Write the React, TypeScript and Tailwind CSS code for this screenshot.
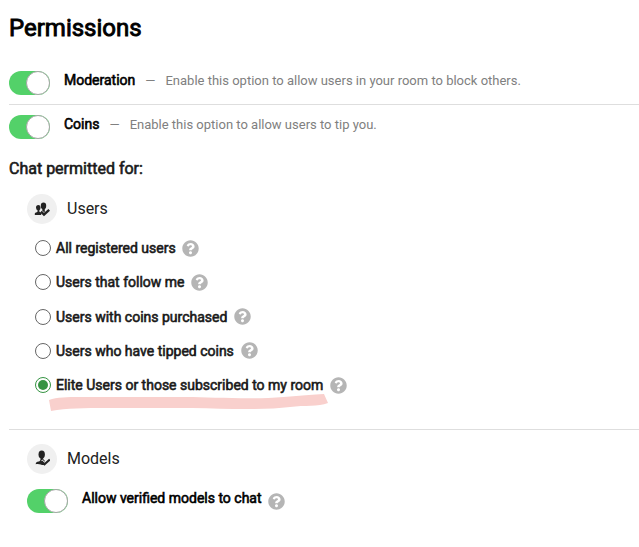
import React, { useState } from 'react';
import { FaQuestionCircle } from 'react-icons/fa';

const audiences = [
  { id: 'registered', label: 'All registered users' },
  { id: 'followers', label: 'Users that follow me' },
  { id: 'purchased', label: 'Users with coins purchased' },
  { id: 'tipped', label: 'Users who have tipped coins' },
  { id: 'elite', label: 'Elite Users or those subscribed to my room' },
];

const Toggle: React.FC<{ label: string }> = ({ label }) => {
  const [on, setOn] = useState(true);

  return (
    <button
      role="switch"
      aria-checked={on}
      aria-label={label}
      onClick={() => setOn(!on)}
      className={`flex h-6 w-[41px] shrink-0 rounded-full ${on ? 'justify-end bg-[#53d169]' : 'justify-start bg-gray-300'}`}
    >
      <span className="h-6 w-6 rounded-full border border-[#a6a6a6] bg-white" />
    </button>
  );
};

const Help: React.FC<{ className?: string }> = ({ className = '' }) => (
  <FaQuestionCircle className={`h-[17px] w-[17px] shrink-0 text-[#b5b5b5] ${className}`} />
);

const UsersIcon = () => (
  <svg width="16" height="16" viewBox="0 0 16 16" fill="#222">
    <ellipse cx="4.300" cy="6.700" rx="2.300" ry="2.600" />
    <path d="M3.500 8.500h1.900v2.200l1.800 1V14H.8v-1.600c0-.9 2-1 2.700-1.700z" />
    <ellipse cx="9.500" cy="4.900" rx="2.700" ry="3.300" stroke="#f0f0f0" strokeWidth=".8" paintOrder="stroke" />
    <path d="M8.300 7h2.500v3.800L9.800 13.500 7 12V11l1.300-.8z" />
    <path d="m8 10.300 2.200 2.300 4.800-4.500" fill="none" stroke="#f0f0f0" strokeWidth="1.600" />
    <path d="m7 10.600 3 2.900 5.200-4.600" fill="none" stroke="#222" strokeWidth="2.400" />
  </svg>
);

const ModelsIcon = () => (
  <svg width="16" height="16" viewBox="0 0 16 16" fill="#222" className="-mt-0.5">
    <ellipse cx="7.700" cy="4.500" rx="3.200" ry="4" />
    <path d="M6.500 7.200h2.500c0 1.800.7 2.700 1.800 3.500L10.500 14.800C7.800 15.800 6.200 13.300 1.700 14.200c.1-1.800 1.100-2.400 3-2.700 1.300-.3 1.800-1.200 1.800-2.500z" />
    <path d="m7.800 10.200 2.700 2.800L15.300 8.600" fill="none" stroke="#f0f0f0" strokeWidth="1.800" />
    <path d="m7.500 11.200 3 3L15.800 9.500" fill="none" stroke="#222" strokeWidth="2.100" />
  </svg>
);

const GroupHeading: React.FC<{ icon: React.ReactNode; title: string }> = ({ icon, title }) => (
  <div className="flex h-[30px] items-center gap-2.5">
    <span className="flex h-[30px] w-[30px] items-center justify-center rounded-full bg-[#f0f0f0]">{icon}</span>
    <h3 className="text-base leading-5 text-[#222]">{title}</h3>
  </div>
);

const Setting: React.FC<{ title: string; description: string }> = ({ title, description }) => (
  <div className="flex h-6">
    <Toggle label={title} />
    <div className="ml-3.5 flex h-[18px] items-center whitespace-pre text-sm text-black">
      <span className="[-webkit-text-stroke:0.6px_currentColor]">{title}</span>
      <span className="ml-2.5 pt-0.5 text-[13px] text-[#808080]">—</span>
      <span className="ml-[10px] pt-0.5 text-[13px] text-[#808080]">{description}</span>
    </div>
  </div>
);

export default function App() {
  const [audience, setAudience] = useState('elite');

  return (
    <main className="h-[547px] overflow-hidden bg-white pl-[9px] font-[Roboto,sans-serif] text-black">
      <h1 className="pt-3 text-2xl leading-8 [-webkit-text-stroke:0.9px_currentColor]">Permissions</h1>

      <div className="mt-[27px] border-b border-[#dedede] pb-[9px]">
        <Setting title="Moderation" description="Enable this option to allow users in your room to block others." />
      </div>
      <div className="pt-2.5">
        <Setting title="Coins" description="Enable this option to allow users to tip you." />
      </div>

      <h2 className="mt-5 text-base leading-5 text-[#1a1a1a] [-webkit-text-stroke:0.6px_currentColor]">Chat permitted for:</h2>

      <section className="mt-[15px] h-[236px] border-b border-[#dedede] pl-[18px]">
        <GroupHeading icon={<UsersIcon />} title="Users" />
        <div className="mt-[7px] pl-2">
          {audiences.map(({ id, label }) => (
            <div key={id} className="flex h-[34.25px] items-center">
              <label className="flex items-center gap-[5px] text-sm text-[#1a1a1a]">
                <input
                  type="radio"
                  name="audience"
                  checked={audience === id}
                  onChange={() => setAudience(id)}
                  className="peer sr-only"
                />
                <span className="flex h-4 w-4 items-center justify-center rounded-full border border-[#666] peer-checked:border-[#369443]">
                  {audience === id && <span className="h-2.5 w-2.5 rounded-full bg-[#369443]" />}
                </span>
                <span className="relative [-webkit-text-stroke:0.6px_currentColor]">
                  {label}
                  {id === 'elite' && (
                    <svg className="absolute -left-[7px] top-[18px]" width="280" height="20" viewBox="0 0 280 20" stroke="none">
                      <path
                        d="M0 7C8 4 18 4 31 4L137 4C159 4 188 6 219 5C243 4 252 2 275 1L279 10C269 14 256 12 241 14C217 17 181 16 143 15L58 15C35 15 18 15 2 18Z"
                        fill="#f9d0cd"
                      />
                    </svg>
                  )}
                </span>
              </label>
              <Help className="ml-[6.75px]" />
            </div>
          ))}
        </div>
      </section>

      <section className="pl-[18px] pt-3.5">
        <GroupHeading icon={<ModelsIcon />} title="Models" />
        <div className="mt-[15px] flex h-6">
          <Toggle label="Allow verified models to chat" />
          <span className="ml-3.5 text-sm leading-[18px] [-webkit-text-stroke:0.6px_currentColor]">Allow verified models to chat</span>
          <Help className="ml-1.5 mt-1" />
        </div>
      </section>
    </main>
  );
}
